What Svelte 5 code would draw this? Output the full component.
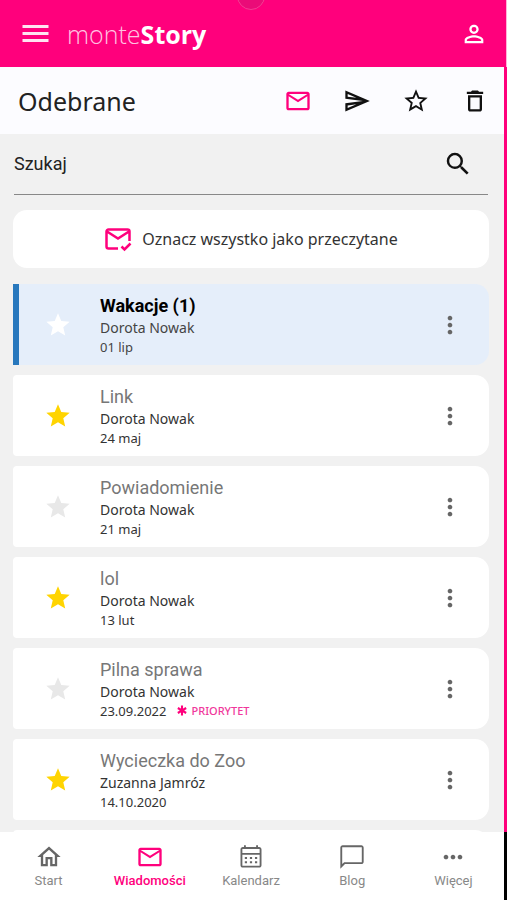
<script>
  const paths = {
    mail: 'M22 6c0-1.100-.9-2-2-2H4c-1.100 0-2 .9-2 2v12c0 1.100.9 2 2 2h16c1.100 0 2-.9 2-2V6zm-2 0-8 5-8-5h16zm0 12H4V8l8 5 8-5v10z',
    send: 'M4.010 6.030l7.510 3.220-7.520-1 .01-2.220m7.500 8.720L4 17.970v-2.220l7.510-1M2.010 3 2 10l15 2-15 2 .01 7L23 12 2.010 3z',
    starOutline: 'M22 9.240l-7.190-.62L12 2 9.190 8.630 2 9.240l5.460 4.730L5.820 21 12 17.270 18.180 21l-1.630-7.030L22 9.240zM12 15.400l-3.760 2.270 1-4.280-3.320-2.880 4.380-.38L12 6.100l1.710 4.040 4.380.38-3.320 2.880 1 4.280L12 15.400z',
    star: 'M12 17.270 18.180 21l-1.640-7.030L22 9.240l-7.190-.61L12 2 9.190 8.630 2 9.240l5.460 4.730L5.820 21z',
    trash: 'M6 19c0 1.100.9 2 2 2h8c1.100 0 2-.9 2-2V7H6v12zM8 9h8v10H8V9zm7.500-5-1-1h-5l-1 1H5v2h14V4z',
    person: 'M12 5.900a2.100 2.100 0 1 1 0 4.200 2.100 2.100 0 0 1 0-4.200m0 9c2.970 0 6.100 1.460 6.100 2.100v1.100H5.900V17c0-.64 3.130-2.100 6.100-2.100M12 4C9.790 4 8 5.790 8 8s1.790 4 4 4 4-1.790 4-4-1.790-4-4-4zm0 9c-2.670 0-8 1.340-8 4v3h16v-3c0-2.660-5.330-4-8-4z',
    search: 'M15.500 14h-.79l-.28-.27A6.470 6.470 0 0 0 16 9.500 6.500 6.500 0 1 0 9.500 16c1.610 0 3.090-.59 4.230-1.570l.27.28v.79l5 4.990L20.490 19l-4.990-5zm-6 0C7.010 14 5 11.990 5 9.500S7.010 5 9.500 5 14 7.010 14 9.500 11.990 14 9.500 14z',
    more: 'M12 8c1.100 0 2-.9 2-2s-.9-2-2-2-2 .9-2 2 .9 2 2 2zm0 2c-1.100 0-2 .9-2 2s.9 2 2 2 2-.9 2-2-.9-2-2-2zm0 6c-1.100 0-2 .9-2 2s.9 2 2 2 2-.9 2-2-.9-2-2-2z',
    home: 'M12 5.690l5 4.500V18h-2v-6H9v6H7v-7.810l5-4.500M12 3 2 12h3v8h6v-6h2v6h6v-8h3L12 3z',
    calendar: 'M19 3.500h-1V2h-1.600v1.500H7.600V2H6v1.500H5c-1.100 0-2 .9-2 2V19c0 1.100.9 2 2 2h14c1.100 0 2-.9 2-2V5.500c0-1.100-.9-2-2-2zm.4 15.900H4.600V10h14.800v9.400zM19.400 8.600H4.600V5.100h14.800v3.500zM6.700 12h1.900v1.700H6.700zm4.350 0h1.900v1.700h-1.900zm4.350 0h1.900v1.700h-1.900zM6.700 15.700h1.900v1.700H6.700zm4.350 0h1.900v1.700h-1.900zm4.350 0h1.900v1.700h-1.900z',
    chat: 'M20 2H4c-1.100 0-2 .9-2 2v18l4-4h14c1.100 0 2-.9 2-2V4c0-1.100-.9-2-2-2zm.4 14.400H5.300L3.600 18.100V3.600h16.800v12.800z',
    dots: 'M6 10c-1.100 0-2 .9-2 2s.9 2 2 2 2-.9 2-2-.9-2-2-2zm12 0c-1.100 0-2 .9-2 2s.9 2 2 2 2-.9 2-2-.9-2-2-2zm-6 0c-1.100 0-2 .9-2 2s.9 2 2 2 2-.9 2-2-.9-2-2-2z'
  };

  const folders = [
    { label: 'Odebrane', icon: 'mail', active: true },
    { label: 'Wysłane', icon: 'send' },
    { label: 'Ulubione', icon: 'starOutline' },
    { label: 'Kosz', icon: 'trash' }
  ];

  const messages = $state([
    { title: 'Wakacje (1)', from: 'Dorota Nowak', date: '01 lip', starred: false, unread: true },
    { title: 'Link', from: 'Dorota Nowak', date: '24 maj', starred: true },
    { title: 'Powiadomienie', from: 'Dorota Nowak', date: '21 maj', starred: false },
    { title: 'lol', from: 'Dorota Nowak', date: '13 lut', starred: true },
    { title: 'Pilna sprawa', from: 'Dorota Nowak', date: '23.09.2022', starred: false, priority: true },
    { title: 'Wycieczka do Zoo', from: 'Zuzanna Jamróz', date: '14.10.2020', starred: true }
  ]);

  const tabs = [
    { label: 'Start', icon: 'home' },
    { label: 'Wiadomości', icon: 'mail', active: true },
    { label: 'Kalendarz', icon: 'calendar' },
    { label: 'Blog', icon: 'chat' },
    { label: 'Więcej', icon: 'dots' }
  ];
</script>

{#snippet icon(name)}
  <svg class="icon" viewBox="0 0 24 24" aria-hidden="true"><path d={paths[name]} /></svg>
{/snippet}

<div class="app">
  <header class="topbar">
    <span class="ripple"></span>
    <button class="menu" aria-label="Menu">
      <svg viewBox="0 0 26 20" aria-hidden="true"><path d="M0 1h26v3H0zM0 8h26v3H0zM0 15h26v3H0z" /></svg>
    </button>
    <a class="brand" href="#start">monte<b>Story</b></a>
    <button class="profile" aria-label="Profil">{@render icon('person')}</button>
  </header>

  <div class="body">
    <div class="screen">
      <div class="folderbar">
        <h1>Odebrane</h1>
        <nav class="folders" aria-label="Foldery">
          {#each folders as f}
            <button class:active={f.active} aria-label={f.label}>{@render icon(f.icon)}</button>
          {/each}
        </nav>
      </div>

      <main>
        <form class="search">
          <input type="text" placeholder="Szukaj" aria-label="Szukaj" />
          <button type="button" aria-label="Wyszukaj">{@render icon('search')}</button>
        </form>

        <button class="markall">
          <svg viewBox="0 0 28 28" aria-hidden="true" fill="none" stroke="currentColor" stroke-width="2.500">
            <path d="M14 23.500H4.500A2 2 0 0 1 2.500 21.500V6.500A2 2 0 0 1 4.500 4.500H23.500A2 2 0 0 1 25.500 6.500V16M3 6.500 14 13.500 25 6.500M17.500 21.500 20.500 24.500 26.500 18.500" />
          </svg>
          <span>Oznacz wszystko jako przeczytane</span>
        </button>

        <ul class="list">
          {#each messages as m}
            <li class:unread={m.unread}>
              <button class="star" class:on={m.starred} aria-label="Ulubione" onclick={() => (m.starred = !m.starred)}>
                {@render icon('star')}
              </button>
              <div class="text">
                <h2>{m.title}</h2>
                <p class="from">{m.from}</p>
                <p class="date">
                  {m.date}
                  {#if m.priority}
                    <span class="priority">
                      <svg viewBox="0 0 12 12" aria-hidden="true"><path d="M6 0V12M1 3 11 9M11 3 1 9" /></svg>PRIORYTET
                    </span>
                  {/if}
                </p>
              </div>
              <button class="more" aria-label="Opcje">{@render icon('more')}</button>
            </li>
          {/each}
          <li class="next" aria-hidden="true"></li>
        </ul>
      </main>
    </div>
  </div>

  <nav class="tabs" aria-label="Nawigacja">
    {#each tabs as t}
      <a href="#{t.icon}" class:active={t.active}>{@render icon(t.icon)}<span>{t.label}</span></a>
    {/each}
  </nav>
</div>

<style>
  .app {
    --pink: #ff007c;
    height: 100vh;
    display: flex;
    flex-direction: column;
    overflow: hidden;
    font-family: Roboto, sans-serif;
    color: #222;
  }
  button {
    display: flex;
    align-items: center;
    justify-content: center;
    padding: 0;
    border: 0;
    background: none;
    color: inherit;
    font: inherit;
    cursor: pointer;
  }
  a { color: inherit; text-decoration: none; }
  h1, h2, p, ul { margin: 0; padding: 0; font-weight: 400; }
  svg { display: block; flex: none; }
  .icon { width: 28px; height: 28px; fill: currentColor; }

  .topbar {
    position: relative;
    flex: none;
    box-sizing: border-box;
    height: 67px;
    padding: 0 18px 0 22px;
    display: flex;
    align-items: center;
    background: var(--pink);
    border-right: 1px solid #ffb3d8;
    color: #fff;
    overflow: hidden;
  }
  .ripple {
    position: absolute;
    top: -18px;
    left: 50%;
    width: 26px;
    height: 26px;
    margin-left: -16px;
    border: 1px solid #f23f93;
    border-radius: 50%;
    background: #ea0c78;
  }
  .menu svg { width: 27px; height: 20px; fill: #ffe3f1; }
  .brand {
    flex: 1;
    margin-left: 18px;
    font: 300 25px/34px "Open Sans", sans-serif;
    color: #ffc4e1;
  }
  .brand b { font-weight: 700; color: #fff; }

  .body {
    flex: 1;
    min-height: 0;
    display: flex;
    border-right: 3px solid var(--pink);
  }
  .screen {
    flex: 1;
    min-width: 0;
    overflow: hidden;
    background: #f1f1f1;
  }
  .folderbar {
    height: 67px;
    padding: 0 15px 0 18px;
    display: flex;
    align-items: center;
    justify-content: space-between;
    background: #fcfcff;
  }
  h1 { font: 400 25px/34px "Noto Sans", sans-serif; }
  .folders { display: flex; gap: 31px; color: #111; }
  .folders .active { color: var(--pink); }

  main { padding: 0 15px 0 13px; }
  .search {
    height: 60px;
    margin: 0 1px;
    display: flex;
    align-items: center;
    border-bottom: 1px solid #888;
  }
  .search input {
    flex: 1;
    min-width: 0;
    padding: 0;
    border: 0;
    outline: 0;
    background: none;
    font: 400 18px/24px Roboto, sans-serif;
    color: #222;
  }
  .search input::placeholder { color: #222; opacity: 1; }
  .search button { margin-right: 15px; color: #111; }
  .search .icon { width: 30px; height: 30px; }

  .markall {
    width: 100%;
    height: 58px;
    margin-top: 15px;
    gap: 10px;
    border-radius: 14px;
    background: #fff;
    font: 400 16px/24px "Noto Sans", sans-serif;
    color: #333;
  }
  .markall svg { width: 28px; height: 28px; color: var(--pink); }

  .list { margin-top: 16px; display: grid; gap: 10px; list-style: none; }
  li {
    height: 81px;
    display: flex;
    align-items: center;
    border-radius: 4px 14px 14px 4px;
    background: #fff;
  }
  .star { width: 46px; margin-left: 22px; color: #e8e8e8; }
  .star.on { color: #ffd400; }
  .text { flex: 1; min-width: 0; margin-left: 19px; }
  h2 { font-size: 18px; line-height: 24px; color: #777; }
  .from { font: 400 14px/20px "Noto Sans", sans-serif; color: #333; }
  .date {
    display: flex;
    align-items: center;
    gap: 11px;
    font: 400 13px/18px "Noto Sans", sans-serif;
    color: #333;
  }
  .priority { display: flex; align-items: center; gap: 4px; font-size: 11px; font-weight: 500; color: #f0389b; }
  .priority svg { width: 10px; height: 11px; fill: none; stroke: var(--pink); stroke-width: 2.500; }
  .more { margin-right: 25px; color: #666; }
  .unread { border-left: 6px solid #2878bd; border-radius: 0 14px 14px 0; background: #e5eefa; }
  .unread .star { margin-left: 16px; color: #fff; }
  .unread h2 { font-weight: 700; color: #000; }
  .unread .from, .unread .date { color: #444; }

  .tabs {
    flex: none;
    height: 68px;
    margin-left: -2px;
    display: grid;
    grid-template-columns: repeat(5, 1fr);
    background: #fff;
    border-right: 3px solid #000;
  }
  .tabs a {
    display: flex;
    flex-direction: column;
    align-items: center;
    padding-top: 11px;
    font-size: 13px;
    line-height: 18px;
    color: #666;
  }
  .tabs span { margin-top: 1px; color: #888; }
  .tabs .active, .tabs .active span { color: var(--pink); }
  .tabs .active span { font-weight: 500; }
</style>
